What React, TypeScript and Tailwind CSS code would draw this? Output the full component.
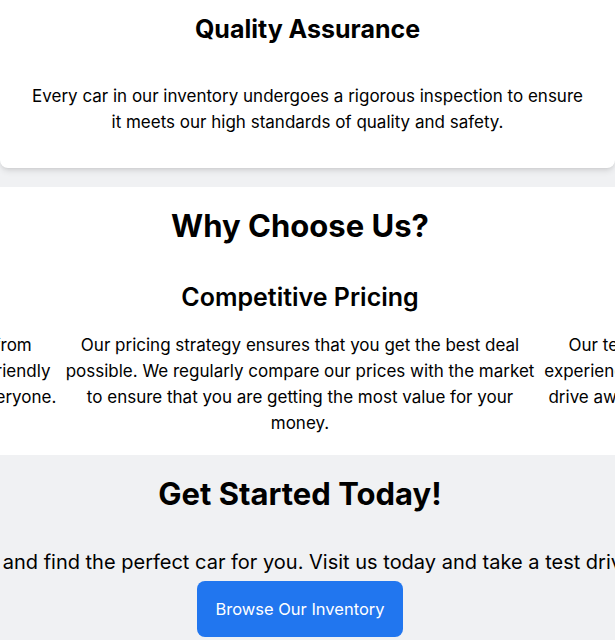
import React from "react";

const reasons = [
  {
    title: "Wide Selection",
    text: "Browse a huge selection of makes and models from reputable brands, with a team that is helpful and friendly making car buying simple, fast and pleasant for everyone.",
  },
  {
    title: "Competitive Pricing",
    text: "Our pricing strategy ensures that you get the best deal possible. We regularly compare our prices with the market to ensure that you are getting the most value for your money.",
  },
  {
    title: "Expert Staff",
    text: "Our team of knowledgeable specialists has years of experience and will help you find the right car, so you can drive away happy and confident about your next vehicle.",
  },
];

export default function App() {
  return (
    <div className="min-h-screen bg-[#f0f1f3] text-black font-['Inter',sans-serif] overflow-hidden">
      {/* feature card */}
      <div className="pb-[19px]">
        <div className="bg-white rounded-b-lg shadow-md text-center px-[30px] pt-[13px] pb-[33px]">
          <h3 className="text-[25px] leading-8 font-bold">Quality Assurance</h3>
          <p className="mt-[38px] text-[17px] leading-[26px]">
            Every car in our inventory undergoes a rigorous inspection to ensure it meets our high standards of quality and safety.
          </p>
        </div>
      </div>

      {/* why choose us */}
      <section className="bg-white pr-[15px] pt-[20px] pb-[19px] text-center">
        <h2 className="text-[31px] leading-[38px] font-bold">Why Choose Us?</h2>
        <div className="mt-[36px]">
          <div className="flex -translate-x-[414px]">
            {reasons.map((r) => (
              <div key={r.title} className="w-[476px] shrink-0">
                <h3 className="text-[25px] leading-8 font-semibold">{r.title}</h3>
                <p className="mt-[19px] text-[17px] leading-[26px]">{r.text}</p>
              </div>
            ))}
          </div>
        </div>
      </section>

      {/* call to action */}
      <section className="pr-[15px] pt-[20px] pb-8 text-center">
        <h2 className="text-[31px] leading-[38px] font-bold">Get Started Today!</h2>
        <div className="mt-[35px] flex justify-center">
          <p className="whitespace-nowrap text-xl leading-7">
            Browse our extensive inventory and find the perfect car for you. Visit us today and take a test drive in the truck of your dreams!
          </p>
        </div>
        <button className="mt-[5px] bg-[#2176ef] text-white text-[16.5px] leading-7 px-[18px] py-[14px] rounded-lg">
          Browse Our Inventory
        </button>
      </section>
    </div>
  );
}
